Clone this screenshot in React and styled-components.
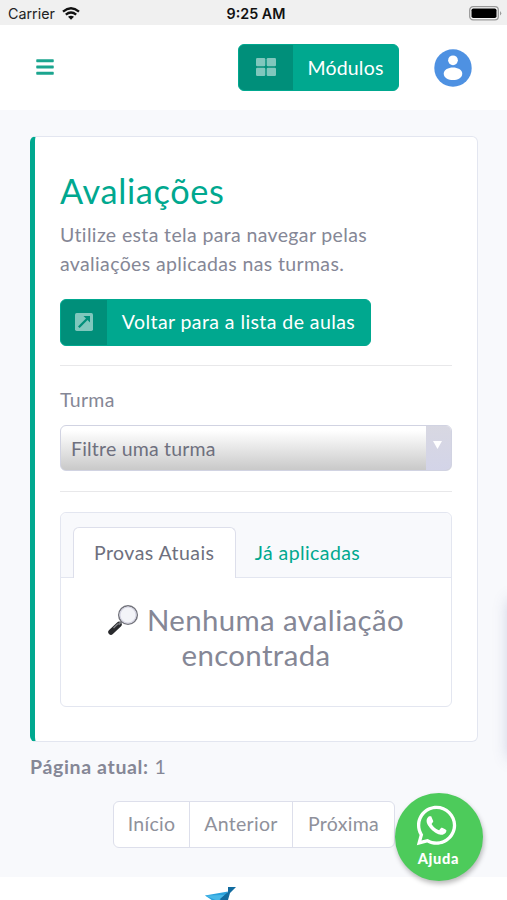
import React from 'react'
import styled, { createGlobalStyle } from 'styled-components'
import { FaBars, FaWhatsapp } from 'react-icons/fa'

const GlobalStyle = createGlobalStyle`
  * {
    box-sizing: border-box;
  }
  body {
    margin: 0;
    background: white;
    color: #858796;
    font-family: Lato, 'Open Sans', sans-serif;
    font-size: 19.5px;
    line-height: 29.4px;
  }
  button {
    font: inherit;
    padding: 0;
    margin: 0;
  }
`
const Page = styled.div`
  position: relative;
  width: 507px;
  height: 900px;
  overflow: hidden;
  display: flex;
  flex-direction: column;
`
const StatusBar = styled.div`
  height: 25px;
  flex: none;
  padding: 2px 5px 0 8px;
  background: #f0f0f0;
  color: #222;
  display: grid;
  grid-template-columns: 1fr auto 1fr;
  align-items: center;
  font-family: Inter, sans-serif;
  font-size: 14.3px;
  line-height: 20px;
`
const Carrier = styled.div`
  display: flex;
  align-items: center;
  gap: 7px;
`
const Clock = styled.div`
  padding-left: 2px;
  font-weight: 600;
  font-size: 14.3px;
  color: #111;
`
const Battery = styled.svg`
  justify-self: end;
`
const Navbar = styled.div`
  height: 85px;
  flex: none;
  padding: 0 35px 0 35px;
  background: white;
  display: flex;
  align-items: center;
`
const MenuButton = styled.button`
  border: 0;
  background: none;
  color: #1ba58f;
  display: flex;
  margin: 0 auto 2px 0;
`
const SplitButton = styled.button`
  width: ${props => props.$width}px;
  height: 47px;
  border: 1px solid #00a88f;
  border-radius: 6px;
  overflow: hidden;
  background: #00a88f;
  color: white;
  display: flex;
  letter-spacing: ${props => props.$spacing}px;
`
const SplitIcon = styled.span`
  width: ${props => props.$width}px;
  flex: none;
  height: 100%;
  padding-bottom: 1px;
  background: #008f7a;
  display: flex;
  align-items: center;
  justify-content: center;
`
const SplitLabel = styled.span`
  flex: 1;
  line-height: ${props => props.$lineHeight || 44}px;
  text-align: center;
  white-space: nowrap;
`
const Avatar = styled.svg`
  margin-left: 35px;
`
const Main = styled.div`
  height: 767px;
  flex: none;
  padding: 26px 29px 0 30px;
  background: #f8f9fc;
`
const Card = styled.div`
  height: 606px;
  padding: 33px 25px 0 25px;
  background: white;
  border: 1px solid #e3e6f0;
  border-left: 5px solid #00a88f;
  border-radius: 6px;
`
const Title = styled.h1`
  margin: 0 0 9px;
  color: #00a88f;
  font-size: 34.3px;
  font-weight: 400;
  line-height: 41px;
  letter-spacing: 0.65px;
`
const Description = styled.p`
  margin: 0 0 20px;
  letter-spacing: 0.36px;
`
const Divider = styled.hr`
  height: 1px;
  margin: ${props => props.$margin};
  border: 0;
  background: #e8e8ea;
`
const Label = styled.label`
  display: block;
  margin-bottom: 11px;
  letter-spacing: 0.3px;
`
const Select = styled.div`
  height: 46px;
  border: 1px solid #d1d3e2;
  border-radius: 6px;
  overflow: hidden;
  background: linear-gradient(#fff 10%, #c9c9c9);
  color: #6e707e;
  display: flex;
  letter-spacing: 0.2px;
`
const SelectValue = styled.span`
  flex: 1;
  padding-left: 10px;
  line-height: 45px;
`
const SelectArrow = styled.span`
  width: 25px;
  padding: 15px 2px 0 0;
  background: linear-gradient(#d8d8e2, #d3d4e8);
  display: flex;
  justify-content: center;
`
const TabCard = styled.div`
  height: 195px;
  border: 1px solid #e3e6f0;
  border-radius: 6px;
`
const TabHeader = styled.div`
  height: 65px;
  padding: 14px 12px 0;
  background: #f8f9fc;
  border-bottom: 1px solid #e3e6f0;
  border-radius: 6px 6px 0 0;
  display: flex;
`
const Tab = styled.div`
  width: ${props => props.$width}px;
  height: 51px;
  border: 1px solid ${props => (props.$active ? '#dddfeb' : 'transparent')};
  border-bottom: 0;
  border-radius: 6px 6px 0 0;
  background: ${props => (props.$active ? 'white' : 'transparent')};
  color: ${props => (props.$active ? '#6e707e' : '#00a88f')};
  line-height: 49px;
  text-align: center;
  letter-spacing: ${props => props.$spacing}px;
`
const Empty = styled.div`
  padding-top: 25px;
  font-size: 29.4px;
  line-height: 34.4px;
  text-align: center;
  letter-spacing: 0.37px;
`
const Magnifier = styled.svg`
  margin-right: 8px;
  vertical-align: -4px;
`
const CurrentPage = styled.div`
  margin-top: 10px;
  letter-spacing: 0.65px;
`
const Pagination = styled.div`
  width: 282px;
  height: 47px;
  margin: 20px 0 0 83px;
  background: white;
  border: 1px solid #dddfeb;
  border-radius: 6px;
  display: flex;
`
const PageLink = styled.div`
  width: ${props => props.$width}px;
  line-height: 44px;
  text-align: center;
  letter-spacing: 0.3px;
  color: #8f919b;

  & + & {
    border-left: 1px solid #dddfeb;
  }
`
const Footer = styled.div`
  flex: 1;
  padding: 10px 0 0 205px;
  background: white;

  svg {
    display: block;
  }
`
const HelpButton = styled.div`
  position: absolute;
  left: 394.5px;
  top: 792.5px;
  width: 88px;
  height: 88px;
  padding-top: 10px;
  border-radius: 50%;
  background: #4dcb5b;
  box-shadow: 1px 3px 5px rgba(0, 0, 0, 0.27);
  color: white;
  display: flex;
  flex-direction: column;
  align-items: center;
  font-size: 14.6px;
  font-weight: 900;
  line-height: 21px;
  letter-spacing: 0.7px;

  svg {
    margin-right: 4px;
  }
`
const EdgeShadow = styled.div`
  position: absolute;
  left: 509px;
  top: 600px;
  width: 20px;
  height: 158px;
  box-shadow: 0 0 16px rgba(78, 90, 150, 0.28);
`

const WifiIcon = () => (
  <svg width='18' height='13' viewBox='0 0 18 13' fill='none' stroke='#111' strokeWidth='2.3'>
    <path d='M1 4.7Q9-2.1 17 4.7' />
    <path d='M3.8 7.6Q9 3.4 14.2 7.6' />
    <path d='M6 9.8Q9 7.5 12 9.8L9 12.7Z' fill='#111' stroke='none' />
  </svg>
)

const ModulesIcon = () => (
  <svg width='20' height='18' viewBox='0 0 20 18' fill='#80c7bd'>
    <rect width='9.3' height='8.3' rx='1.3' />
    <rect x='10.7' width='9.3' height='8.3' rx='1.3' />
    <rect y='9.7' width='9.3' height='8.3' rx='1.3' />
    <rect x='10.7' y='9.7' width='9.3' height='8.3' rx='1.3' />
  </svg>
)

const ExternalIcon = () => (
  <svg width='18' height='18' viewBox='0 0 18 18'>
    <rect width='18' height='18' rx='1.7' fill='#80c7bd' />
    <path d='M3.8 14.2L12.5 5.5' stroke='#008f7a' strokeWidth='2.3' />
    <path d='M8.5 3H15V9.5Z' fill='#008f7a' />
  </svg>
)

export default () => {
  return (
    <Page>
      <GlobalStyle />
      <StatusBar>
        <Carrier>
          <span>Carrier</span>
          <WifiIcon />
        </Carrier>
        <Clock>9:25 AM</Clock>
        <Battery width='33' height='15' viewBox='0 0 33 15'>
          <rect x='.7' y='.7' width='28.6' height='13.2' rx='3.4' fill='#f8f8f8' stroke='#999' strokeWidth='1.3' />
          <rect x='2.5' y='2.5' width='25' height='9.6' rx='1.8' fill='#000' />
          <path d='M31 5Q33.5 7.3 31 9.6Z' fill='#999' />
        </Battery>
      </StatusBar>
      <Navbar>
        <MenuButton>
          <FaBars size={20} />
        </MenuButton>
        <SplitButton $width={161} $spacing={0.2}>
          <SplitIcon $width={54}>
            <ModulesIcon />
          </SplitIcon>
          <SplitLabel $lineHeight={45}>Módulos</SplitLabel>
        </SplitButton>
        <Avatar width='38' height='38' viewBox='0 0 39 39'>
          <circle cx='19.5' cy='19.5' r='19.2' fill='#4e91e2' />
          <circle cx='19.5' cy='11.6' r='5' fill='white' />
          <path d='M10 25.4C10 16.8 29 16.8 29 25.4C29 34 10 34 10 25.4Z' fill='white' />
        </Avatar>
      </Navbar>
      <Main>
        <Card>
          <Title>Avaliações</Title>
          <Description>
            Utilize esta tela para navegar pelas
            <br />
            avaliações aplicadas nas turmas.
          </Description>
          <SplitButton $width={311} $spacing={0.42}>
            <SplitIcon $width={46}>
              <ExternalIcon />
            </SplitIcon>
            <SplitLabel>Voltar para a lista de aulas</SplitLabel>
          </SplitButton>
          <Divider $margin='19px 0' />
          <Label>Turma</Label>
          <Select>
            <SelectValue>Filtre uma turma</SelectValue>
            <SelectArrow>
              <svg width='9' height='8' viewBox='0 0 9 8'>
                <path d='M0 0H9L4.5 8Z' fill='white' />
              </svg>
            </SelectArrow>
          </Select>
          <Divider $margin='20px 0' />
          <TabCard>
            <TabHeader>
              <Tab $active $width={162.5} $spacing={0.45}>Provas Atuais</Tab>
              <Tab $width={144} $spacing={0.4}>Já aplicadas</Tab>
            </TabHeader>
            <Empty>
              <Magnifier width='31' height='31' viewBox='0 0 31 31'>
                <path d='M3 28L11 20.5' stroke='#292a2d' strokeWidth='5.5' strokeLinecap='round' />
                <path d='M5.5 24L10 19.8' stroke='#85868a' strokeWidth='1.3' />
                <path d='M10.5 20.5L14 17.2' stroke='#77787d' strokeWidth='2' />
                <circle cx='20' cy='11' r='9.3' fill='#f3f4f8' stroke='#73747c' strokeWidth='1.5' />
                <circle cx='20' cy='11' r='8' fill='none' stroke='#d5d4e2' strokeWidth='1.1' />
              </Magnifier>
              Nenhuma avaliação
              <br />
              encontrada
            </Empty>
          </TabCard>
        </Card>
        <CurrentPage>
          <b>Página atual:</b> 1
        </CurrentPage>
        <Pagination>
          <PageLink $width={75}>Início</PageLink>
          <PageLink $width={103}>Anterior</PageLink>
          <PageLink $width={102}>Próxima</PageLink>
        </Pagination>
      </Main>
      <Footer>
        <svg width='31' height='20' viewBox='0 0 31 20'>
          <path d='M0 8.5L23 4.5L17 20Z' fill='#2aa2dc' />
          <path d='M0 8.5L20 8L13 14Z' fill='#48b8e8' />
          <path d='M23 0H31L25 6L21 20L15 12L23 5Z' fill='#116b9f' />
        </svg>
      </Footer>
      <EdgeShadow />
      <HelpButton>
        <FaWhatsapp size={45} />
        Ajuda
      </HelpButton>
    </Page>
  )
}
